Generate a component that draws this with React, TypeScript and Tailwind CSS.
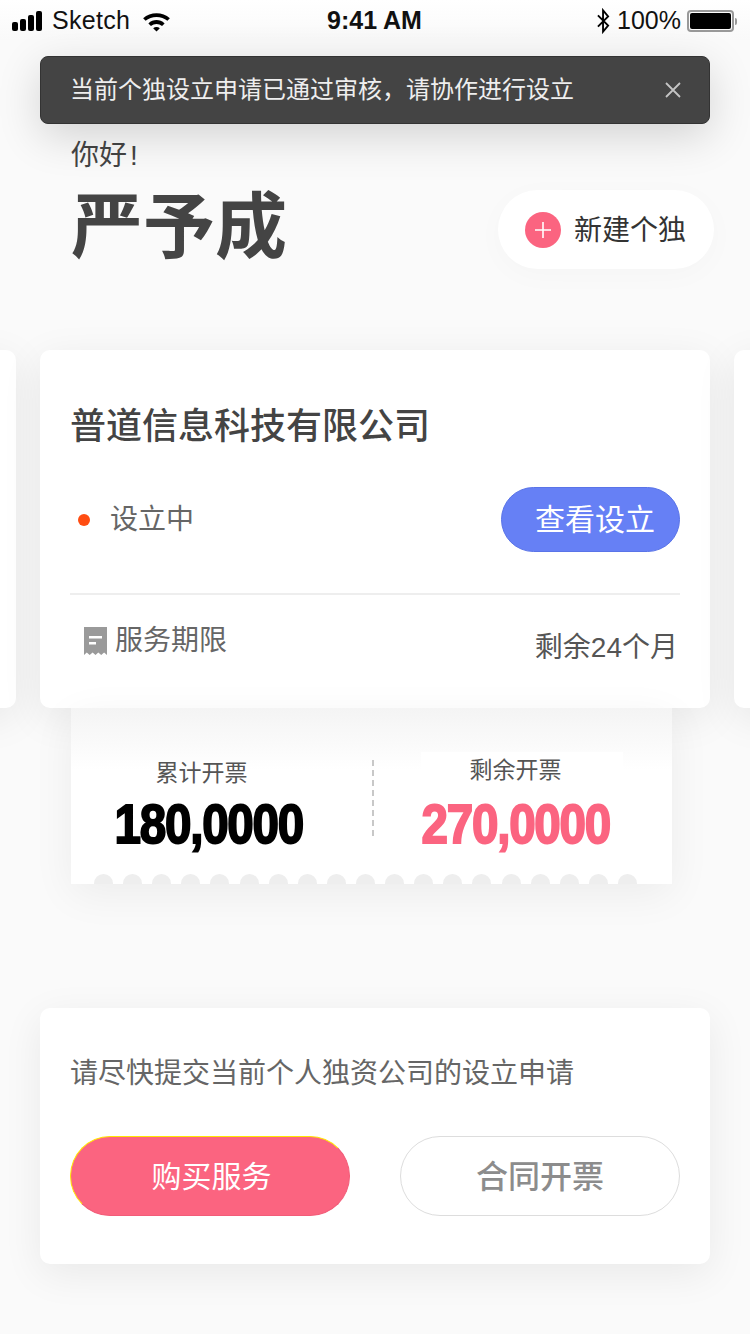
const cjk = "font-['Liberation_Sans','Noto_Sans_CJK_SC',sans-serif]";

function StatusBar() {
  return (
    <div className="relative flex h-10 items-center justify-between bg-gradient-to-b from-white to-[#f9f9f9] pl-3 pr-[13px] pt-[2px] font-['Liberation_Sans',sans-serif] text-[25px] text-[#111]">
      <div className="flex items-center">
        <div className="flex items-end gap-[2px]">
          <span className="h-[9px] w-[6px] rounded-[2px] bg-black" />
          <span className="h-[12px] w-[6px] rounded-[2px] bg-black" />
          <span className="h-[16px] w-[6px] rounded-[2px] bg-black" />
          <span className="h-[20px] w-[6px] rounded-[2px] bg-black" />
        </div>
        <span className="ml-[10px] tracking-[0.3px]">Sketch</span>
        <svg className="ml-[12px]" width="29" height="21" viewBox="0 0 30 22">
          <path d="M1 7.500C8.500 .5 21.500 .5 29 7.500l-2.600 2.800C20.500 4.800 9.500 4.800 3.600 10.300z" fill="#000" />
          <path d="M6.500 13c5-4.600 12-4.600 17 0l-2.700 2.800c-3.400-3-8.200-3-11.600 0z" fill="#000" />
          <path d="M11.500 18c2-1.700 5-1.700 7 0L15 21.500z" fill="#000" />
        </svg>
      </div>
      <span className="absolute left-[327px] font-semibold">9:41 AM</span>
      <div className="flex items-center">
        <svg width="15" height="26" viewBox="0 0 16 28" fill="none" stroke="#000" strokeWidth="2">
          <path d="M2 8l11 11-5.500 6.500V2.500L13 9 2 20" />
        </svg>
        <span className="ml-[6px]">100%</span>
        <div className="ml-[6px] flex h-[22px] w-[47px] items-center rounded-[4px] border-2 border-[#999] p-[1px]">
          <div className="h-full w-full rounded-[2px] bg-black" />
        </div>
        <span className="ml-[1px] h-[7px] w-[2px] rounded-r-sm bg-[#999]" />
      </div>
    </div>
  );
}

function Toast() {
  return (
    <div className="absolute left-10 top-14 z-10 flex h-[68px] w-[670px] items-center justify-between rounded-lg border border-[#333] bg-[#444] pl-[29px] pr-[27px] shadow-[0_12px_44px_rgba(0,0,0,0.16)]">
      <span className="text-[24px] text-[#eeeeee]">当前个独设立申请已通过审核，请协作进行设立</span>
      <svg width="18" height="18" viewBox="0 0 18 18" stroke="#c4c4c4" strokeWidth="1.800">
        <path d="M2 2l14 14M16 2L2 16" />
      </svg>
    </div>
  );
}

function Header() {
  return (
    <div className="flex items-end justify-between pl-[71px] pr-9 pt-[100px]">
      <div className="pb-[2px] text-[#444]">
        <div className="text-[28px] leading-[32px]">
          你好<span className="ml-[3px]">!</span>
        </div>
        <div className="mt-[15px] text-[72px] font-bold leading-[80px]">严予成</div>
      </div>
      <div className="flex h-[79px] w-[216px] items-center rounded-full bg-white pl-[27px] shadow-[0_6px_30px_rgba(0,0,0,0.025)]">
        <div className="flex h-9 w-9 items-center justify-center rounded-full bg-[#fb6480]">
          <svg width="16" height="16" viewBox="0 0 16 16" stroke="#fff" strokeWidth="1.600">
            <path d="M8 0v16M0 8h16" />
          </svg>
        </div>
        <span className="ml-[13px] pt-[3px] text-[28px] text-[#333]">新建个独</span>
      </div>
    </div>
  );
}

function ReceiptIcon() {
  return (
    <svg width="23" height="28" viewBox="0 0 23 28">
      <path d="M0 0h23v28l-2.900-2.500-2.900 2.500-2.900-2.500-2.800 2.500-2.900-2.500-2.900 2.500-2.900-2.500L0 28z" fill="#9a9a9a" />
      <path d="M5 9h13v2.500H5zM5 15h7v2.500H5z" fill="#fff" />
    </svg>
  );
}

function CompanyCard() {
  return (
    <div className="h-[358px] w-[670px] shrink-0 rounded-[10px] bg-white px-[30px] pt-[54px] shadow-[0_10px_40px_rgba(0,0,0,0.08)]">
      <div className="text-[36px] font-medium leading-[46px] text-[#444]">普道信息科技有限公司</div>
      <div className="mt-[37px] flex items-center justify-between pl-2">
        <div className="flex items-center">
          <span className="h-3 w-3 rounded-full bg-[#ff4d12]" />
          <span className="ml-[20px] text-[28px] leading-[40px] text-[#666]">设立中</span>
        </div>
        <div className="flex h-[65px] w-[179px] items-center justify-center rounded-full border border-[#5a74e8] bg-[#6680f5] pl-[9px] text-[30px] text-white">
          查看设立
        </div>
      </div>
      <div className="mt-[41px] h-[2px] bg-[#eeeeee]" />
      <div className="flex items-start justify-between pl-[14px] pr-[2px]">
        <div className="mt-[26px] flex items-center">
          <ReceiptIcon />
          <span className="ml-[8px] text-[28px] leading-[40px] text-[#666]">服务期限</span>
        </div>
        <span className="mt-[33px] text-[28px] leading-[40px] text-[#555]">剩余24个月</span>
      </div>
    </div>
  );
}

function Amount({ value, color }: { value: string; color: string }) {
  return (
    <div
      className={`origin-center scale-x-[0.85] whitespace-nowrap font-['Liberation_Sans',sans-serif] text-[56px] font-bold leading-[54px] tracking-[-1.5px] [-webkit-text-stroke:2px_currentColor] ${color}`}
    >
      {value}
    </div>
  );
}

function Ticket() {
  const dots = Array.from({ length: 19 });
  return (
    <div className="relative ml-[71px] h-[176px] w-[601px] bg-gradient-to-b from-[#f4f4f4] from-0% to-white to-35% shadow-[0_10px_40px_rgba(0,0,0,0.06)]">
      <div className="flex">
        <div className="flex w-[261px] flex-col items-center pt-[50px]">
          <div className="text-[23px] leading-[30px] text-[#555]">累计开票</div>
          <div className="ml-[14px] mt-[9px]">
            <Amount value="180,0000" color="text-black" />
          </div>
        </div>
        <div className="ml-[40px] mt-[52px] h-[76px] border-l-2 border-dashed border-[#c8c8c8]" />
        <div className="ml-[47px] mt-[44px] flex w-[202px] flex-col items-center bg-white pr-[13px]">
          <div className="text-[23px] leading-[36px] text-[#555]">剩余开票</div>
          <div className="mt-[9px]">
            <Amount value="270,0000" color="text-[#fb6480]" />
          </div>
        </div>
      </div>
      <div className="absolute bottom-0 left-[23px] right-[35px] flex justify-between">
        {dots.map((_, i) => (
          <span key={i} className="h-[10px] w-[19px] rounded-t-full bg-[#eeeeee]" />
        ))}
      </div>
    </div>
  );
}

function ApplyCard() {
  return (
    <div className="mx-10 mt-[124px] h-[256px] rounded-[10px] bg-white px-[30px] pt-[46px] shadow-[0_10px_40px_rgba(0,0,0,0.07)]">
      <div className="text-[28px] leading-[40px] text-[#666]">请尽快提交当前个人独资公司的设立申请</div>
      <div className="mt-[42px] flex justify-between">
        <div className="flex h-20 w-[280px] items-center justify-center rounded-full border border-b-[#f25c78] border-l-[#ffe600] border-r-[#f25c78] border-t-[#ffe600] bg-[#fb6480] pl-[3px] text-[30px] text-white">
          购买服务
        </div>
        <div className="flex h-20 w-[280px] items-center justify-center rounded-full border border-[#dddddd] bg-white pt-[1px] text-[32px] font-medium text-[#8c8c8c]">
          合同开票
        </div>
      </div>
    </div>
  );
}

export default function App() {
  return (
    <div className={`relative h-[1334px] w-[750px] overflow-hidden bg-[#fafafa] ${cjk}`}>
      <StatusBar />
      <Toast />
      <Header />
      <div className="mt-[81px] flex justify-center gap-6">
        <div className="h-[358px] w-[670px] shrink-0 rounded-[10px] bg-white shadow-[0_10px_40px_rgba(0,0,0,0.08)]" />
        <CompanyCard />
        <div className="h-[358px] w-[670px] shrink-0 rounded-[10px] bg-white shadow-[0_10px_40px_rgba(0,0,0,0.08)]" />
      </div>
      <Ticket />
      <ApplyCard />
    </div>
  );
}
